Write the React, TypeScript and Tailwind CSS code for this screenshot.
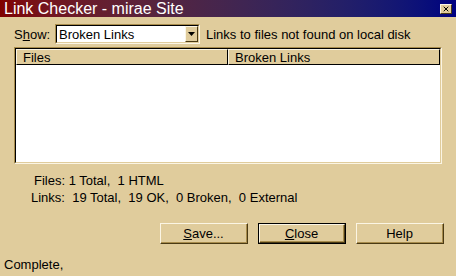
import { X } from 'lucide-react';

function Button({ label, hot, rest, isDefault }: { label?: string; hot?: string; rest: string; isDefault?: boolean }) {
  return (
    <div className={`w-[88px] h-[21px] ${isDefault ? 'border border-black' : ''}`}>
      <div className="h-full border-t border-l border-[#fbf5e4] border-r border-b border-r-[#4a3a14] border-b-[#4a3a14]">
        <div className="h-full flex items-center justify-center border-r border-b border-[#a88c4c]">
          {hot && <span className="underline">{hot}</span>}
          <span>{rest}</span>
        </div>
      </div>
    </div>
  );
}

export default function App() {
  return (
    <div
      className="w-[456px] h-[276px] bg-[#e0cc9c] flex flex-col text-[13px] text-black leading-none overflow-hidden"
      style={{ fontFamily: '"Liberation Sans", Arial, sans-serif' }}
    >
      {/* Title bar */}
      <div className="h-[17px] flex items-center justify-between pl-[4px] pr-[4px] bg-gradient-to-r from-[#800000] to-[#000080]">
        <span className="text-white text-[16px]">Link Checker - mirae Site</span>
        <div className="w-[12px] h-[10px] bg-[#e0cc9c] border-t border-l border-[#fbf5e4] border-r border-b border-r-[#4a3a14] border-b-[#4a3a14] flex items-center justify-center">
          <X className="w-[8px] h-[8px]" strokeWidth={3} />
        </div>
      </div>

      {/* Show row */}
      <div className="flex items-center mt-[7px] pl-[14px]">
        <span className="w-[41px]">
          S<span className="underline">h</span>ow:
        </span>
        <div className="w-[145px] h-[20px] border-t border-l border-[#a88c4c] border-r border-b border-r-[#fbf5e4] border-b-[#fbf5e4]">
          <div className="h-full flex border-t border-l border-black border-r border-b border-r-[#e0cc9c] border-b-[#e0cc9c] bg-white">
            <span className="flex-1 flex items-center pl-[2px]">Broken Links</span>
            <div className="w-[13px] bg-[#e0cc9c] border-t border-l border-[#fbf5e4] border-r border-b border-r-[#4a3a14] border-b-[#4a3a14] flex items-center justify-center">
              <svg width="7" height="4" viewBox="0 0 7 4">
                <polygon points="0,0 7,0 3.5,4" fill="black" />
              </svg>
            </div>
          </div>
        </div>
        <span className="ml-[6px]">Links to files not found on local disk</span>
      </div>

      {/* List */}
      <div className="ml-[14px] mt-[3px] w-[428px] h-[117px] border-t border-l border-[#a88c4c] border-r border-b border-r-[#fbf5e4] border-b-[#fbf5e4]">
        <div className="h-full flex flex-col bg-white border-t border-l border-black border-r border-b border-r-[#e0cc9c] border-b-[#e0cc9c]">
          <div className="flex h-[16px] bg-[#e0cc9c]">
            <div className="w-[212px] flex items-center pl-[6px] border-t border-l border-[#fbf5e4] border-r border-b border-r-black border-b-black">
              Files
            </div>
            <div className="flex-1 flex items-center pl-[6px] border-t border-l border-[#fbf5e4] border-r border-b border-r-black border-b-black">
              Broken Links
            </div>
          </div>
        </div>
      </div>

      {/* Stats */}
      <div className="mt-[10px] pl-[34px]">Files: 1 Total,&nbsp; 1 HTML</div>
      <div className="mt-[4px] pl-[31px]">Links:&nbsp; 19 Total,&nbsp; 19 OK,&nbsp; 0 Broken,&nbsp; 0 External</div>

      {/* Buttons */}
      <div className="flex justify-end gap-[10px] mt-[19px] pr-[12px]">
        <Button hot="S" rest="ave..." />
        <Button hot="C" rest="lose" isDefault />
        <Button rest="Help" />
      </div>

      <div className="mt-[14px] pl-[4px]">Complete,</div>
    </div>
  );
}
